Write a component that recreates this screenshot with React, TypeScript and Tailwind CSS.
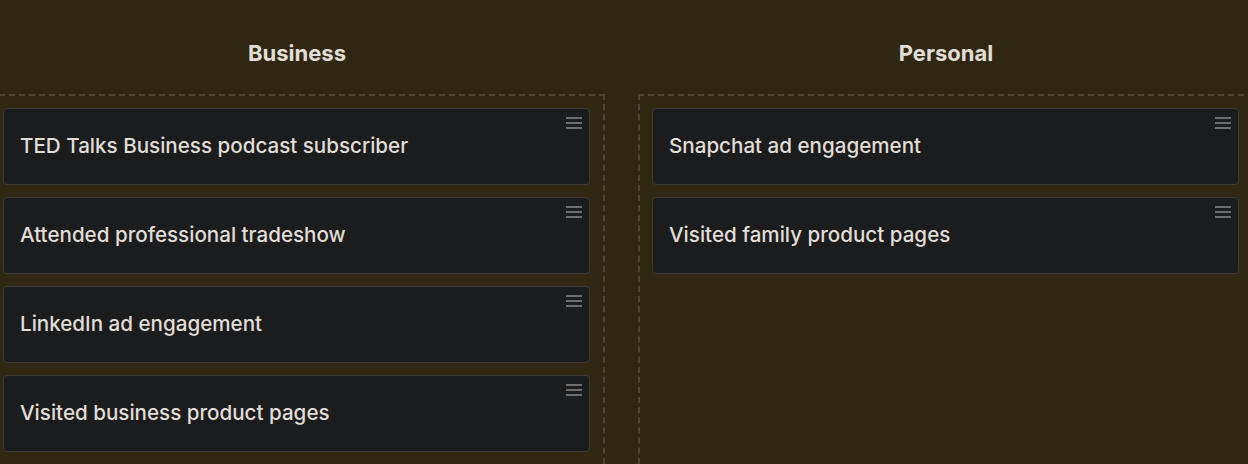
const business = [
  "TED Talks Business podcast subscriber",
  "Attended professional tradeshow",
  "LinkedIn ad engagement",
  "Visited business product pages",
];

const personal = ["Snapchat ad engagement", "Visited family product pages"];

function Handle() {
  return (
    <div className="absolute right-[7px] top-[8px] flex w-[16px] flex-col gap-[3px]">
      <span className="h-[2px] bg-[#6e6e6e]" />
      <span className="h-[2px] bg-[#6e6e6e]" />
      <span className="h-[2px] bg-[#6e6e6e]" />
    </div>
  );
}

function Card({ label }: { label: string }) {
  return (
    <div className="relative flex h-[77px] items-center rounded-[4px] border border-[#3a3a38] bg-[#1b1c1e] pl-[16px]">
      <Handle />
      <span className="text-[20.6px] font-medium text-[#e2ded6]">{label}</span>
    </div>
  );
}

function Column({ title, items }: { title: string; items: string[] }) {
  return (
    <div className="flex w-[616px] shrink-0 flex-col">
      <h2 className="flex h-[94px] items-center justify-center pt-[12px] text-[22px] font-bold text-[#e2ded6]">
        {title}
      </h2>
      <div className="flex h-[400px] flex-col gap-[12px] border-2 border-dashed border-[#51472f] pl-[12px] pr-[13px] pt-[12px]">
        {items.map((item) => (
          <Card key={item} label={item} />
        ))}
      </div>
    </div>
  );
}

export default function App() {
  return (
    <div
      className="h-[464px] w-[1248px] overflow-hidden bg-[#302713]"
      style={{ fontFamily: "Inter, 'Noto Sans', sans-serif" }}
    >
      <div className="-ml-[11px] flex gap-[33px]">
        <Column title="Business" items={business} />
        <Column title="Personal" items={personal} />
      </div>
    </div>
  );
}
